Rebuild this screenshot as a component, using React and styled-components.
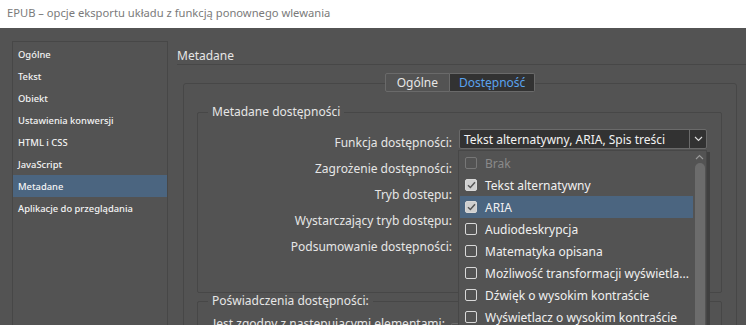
import React from 'react'
import styled, { createGlobalStyle } from 'styled-components'

const GlobalStyle = createGlobalStyle`
  html, body {
    margin: 0;
    padding: 0;
    width: 746px;
    height: 325px;
    overflow: hidden;
    background: #535353;
  }
  * { box-sizing: border-box; }
`

const UI = `'Noto Sans', 'Open Sans', sans-serif`

const Window = styled.div`
  width: 746px;
  height: 325px;
  display: flex;
  flex-direction: column;
  overflow: hidden;
  font-family: ${UI};
`

const TitleBar = styled.div`
  height: 28px;
  flex: none;
  background: #ffffff;
  color: #7a7a7a;
  font-size: 11.2px;
  display: flex;
  align-items: center;
  padding: 0 0 3px 7px;
`

const Body = styled.div`
  flex: 1;
  display: flex;
  background: #535353;
  min-height: 0;
`

const Sidebar = styled.ul`
  list-style: none;
  margin: 13px 0 0 12px;
  padding: 1px 0 0;
  width: 156px;
  height: 300px;
  flex: none;
  border: 1px solid #474747;
`

const NavItem = styled.li`
  height: 22px;
  display: flex;
  align-items: center;
  padding-left: 5px;
  font-size: 9.4px;
  font-weight: 500;
  color: #f4f4f4;
  background: ${(p) => (p.$active ? '#4b6580' : 'transparent')};
`

const Main = styled.div`
  flex: 1;
  padding: 16px 0 0 9px;
  display: flex;
  flex-direction: column;
  min-width: 0;
`

const Heading = styled.div`
  font-size: 12px;
  color: #e6e6e6;
  height: 21px;
  padding-top: 3px;
  line-height: 17px;
  border-bottom: 1px solid #474747;
`

const Tabs = styled.div`
  display: flex;
  justify-content: center;
  margin: 8px 9px -9px 6px;
  position: relative;
  z-index: 1;
`

const Tab = styled.div`
  height: 19px;
  display: flex;
  align-items: center;
  padding: 0 ${(p) => p.$pad}px;
  font-size: 12px;
  color: ${(p) => (p.$active ? '#5aa3ee' : '#e6e6e6')};
  background: ${(p) => (p.$active ? '#323232' : '#535353')};
  border: 1px solid #6a6a6a;
  border-left-width: ${(p) => (p.$active ? 0 : 1)}px;
  border-radius: ${(p) => (p.$active ? '0 2px 2px 0' : '2px 0 0 2px')};
`

const OuterGroup = styled.div`
  margin: 0 9px 0 6px;
  flex: 1;
  border: 1px solid #474747;
  border-radius: 3px;
  padding: 20px 14px 0 13px;
`

const Group = styled.fieldset`
  margin: 0;
  padding: 6px 0 0;
  border: 1px solid #474747;
  border-radius: 2px;
  min-height: ${(p) => p.$minHeight || 0}px;
`

const Legend = styled.legend`
  margin-left: 10px;
  padding: 0 4px;
  font-size: 12px;
  color: #e6e6e6;
  line-height: 16px;
`

const FormGrid = styled.div`
  display: grid;
  grid-template-columns: 254px 248px;
  column-gap: 7px;
  grid-auto-rows: 26px;
  align-items: center;
`

const Label = styled.div`
  text-align: right;
  font-size: 12px;
  color: #e6e6e6;
  white-space: nowrap;
  padding-top: 6px;
`

const FieldWrap = styled.div`
  position: relative;
  height: 20px;
`

const Select = styled.div`
  height: 20px;
  display: flex;
  align-items: stretch;
  background: #323232;
  border: 1px solid #6a6a6a;
  border-radius: 2px;
  font-size: 12px;
  color: #f2f2f2;
`

const SelectValue = styled.div`
  flex: 1;
  display: flex;
  align-items: center;
  padding-left: 4px;
  white-space: nowrap;
  overflow: hidden;
`

const SelectButton = styled.div`
  width: 17px;
  border-left: 1px solid #6a6a6a;
  display: flex;
  align-items: center;
  justify-content: center;
`

const Menu = styled.div`
  position: absolute;
  left: -1px;
  top: 21px;
  width: 249px;
  height: 200px;
  background: #535353;
  border: 1px solid #474747;
  box-shadow: 3px 2px 0 #404040;
  display: flex;
  padding: 1px 0 0 1px;
  z-index: 5;
`

const MenuList = styled.div`
  flex: 1;
  display: flex;
  flex-direction: column;
`

const MenuItem = styled.div`
  height: 22px;
  flex: none;
  display: flex;
  align-items: center;
  gap: 8px;
  padding-left: 5px;
  font-size: 12px;
  white-space: nowrap;
  color: ${(p) => (p.$disabled ? '#8a8a8a' : '#f0f0f0')};
  background: ${(p) => (p.$active ? '#4b6580' : 'transparent')};
`

const Box = styled.span`
  width: 12px;
  height: 12px;
  flex: none;
  border-radius: 2px;
  border: 1px solid ${(p) => (p.$disabled ? '#777' : '#d8d8d8')};
  background: ${(p) => (p.$checked ? '#cfcfcf' : 'transparent')};
  display: flex;
  align-items: center;
  justify-content: center;
`

const Scrollbar = styled.div`
  width: 13px;
  flex: none;
  display: flex;
  flex-direction: column;
  align-items: center;
  padding-top: 2px;
`

const Thumb = styled.div`
  margin-top: 3px;
  width: 10px;
  flex: 1;
  background: #6c6c6c;
  border-radius: 5px 5px 0 0;
`

const Note = styled.div`
  font-size: 12px;
  color: #e6e6e6;
  display: flex;
  align-items: flex-start;
  gap: 6px;
  padding: 0 0 0 15px;
  white-space: nowrap;
`

const SmallField = styled.span`
  width: 60px;
  height: 14px;
  margin-top: 8px;
  border: 1px solid #6a6a6a;
  border-bottom: none;
  border-radius: 2px 2px 0 0;
`

const Chevron = ({ up }) => (
  <svg width="9" height="6" viewBox="0 0 9 6">
    <path
      d={up ? 'M1 5 L4.5 1.5 L8 5' : 'M1 1 L4.5 4.5 L8 1'}
      fill="none"
      stroke={up ? '#9a9a9a' : '#e0e0e0'}
      strokeWidth="1.1"
    />
  </svg>
)

const Check = () => (
  <svg width="9" height="8" viewBox="0 0 9 8">
    <path d="M1 4.2 L3.4 6.5 L8 1.3" fill="none" stroke="#555" strokeWidth="1.5" />
  </svg>
)

const navItems = [
  'Ogólne',
  'Tekst',
  'Obiekt',
  'Ustawienia konwersji',
  'HTML i CSS',
  'JavaScript',
  'Metadane',
  'Aplikacje do przeglądania',
]

const rows = [
  'Funkcja dostępności:',
  'Zagrożenie dostępności:',
  'Tryb dostępu:',
  'Wystarczający tryb dostępu:',
  'Podsumowanie dostępności:',
]

const options = [
  { label: 'Brak', disabled: true },
  { label: 'Tekst alternatywny', checked: true },
  { label: 'ARIA', checked: true, active: true },
  { label: 'Audiodeskrypcja' },
  { label: 'Matematyka opisana' },
  { label: 'Możliwość transformacji wyświetla...' },
  { label: 'Dźwięk o wysokim kontraście' },
  { label: 'Wyświetlacz o wysokim kontraście' },
]

export default function App() {
  return (
    <Window>
      <GlobalStyle />
      <TitleBar>EPUB – opcje eksportu układu z funkcją ponownego wlewania</TitleBar>
      <Body>
        <Sidebar>
          {navItems.map((item) => (
            <NavItem key={item} $active={item === 'Metadane'}>
              {item}
            </NavItem>
          ))}
        </Sidebar>
        <Main>
          <Heading>Metadane</Heading>
          <Tabs>
            <Tab $pad={11}>Ogólne</Tab>
            <Tab $pad={9} $active>Dostępność</Tab>
          </Tabs>
          <OuterGroup>
            <Group $minHeight={189}>
              <Legend>Metadane dostępności</Legend>
              <FormGrid>
                {rows.map((label, i) => (
                  <React.Fragment key={label}>
                    <Label>{label}</Label>
                    {i === 0 ? (
                      <FieldWrap>
                        <Select>
                          <SelectValue>Tekst alternatywny, ARIA, Spis treści</SelectValue>
                          <SelectButton>
                            <Chevron />
                          </SelectButton>
                        </Select>
                        <Menu>
                          <MenuList>
                            {options.map((o) => (
                              <MenuItem key={o.label} $disabled={o.disabled} $active={o.active}>
                                <Box $checked={o.checked} $disabled={o.disabled}>
                                  {o.checked && <Check />}
                                </Box>
                                {o.label}
                              </MenuItem>
                            ))}
                          </MenuList>
                          <Scrollbar>
                            <Chevron up />
                            <Thumb />
                          </Scrollbar>
                        </Menu>
                      </FieldWrap>
                    ) : (
                      <FieldWrap />
                    )}
                  </React.Fragment>
                ))}
              </FormGrid>
            </Group>
            <Group>
              <Legend>Poświadczenia dostępności:</Legend>
              <Note>
                Jest zgodny z następującymi elementami:
                <SmallField />
              </Note>
            </Group>
          </OuterGroup>
        </Main>
      </Body>
    </Window>
  )
}
